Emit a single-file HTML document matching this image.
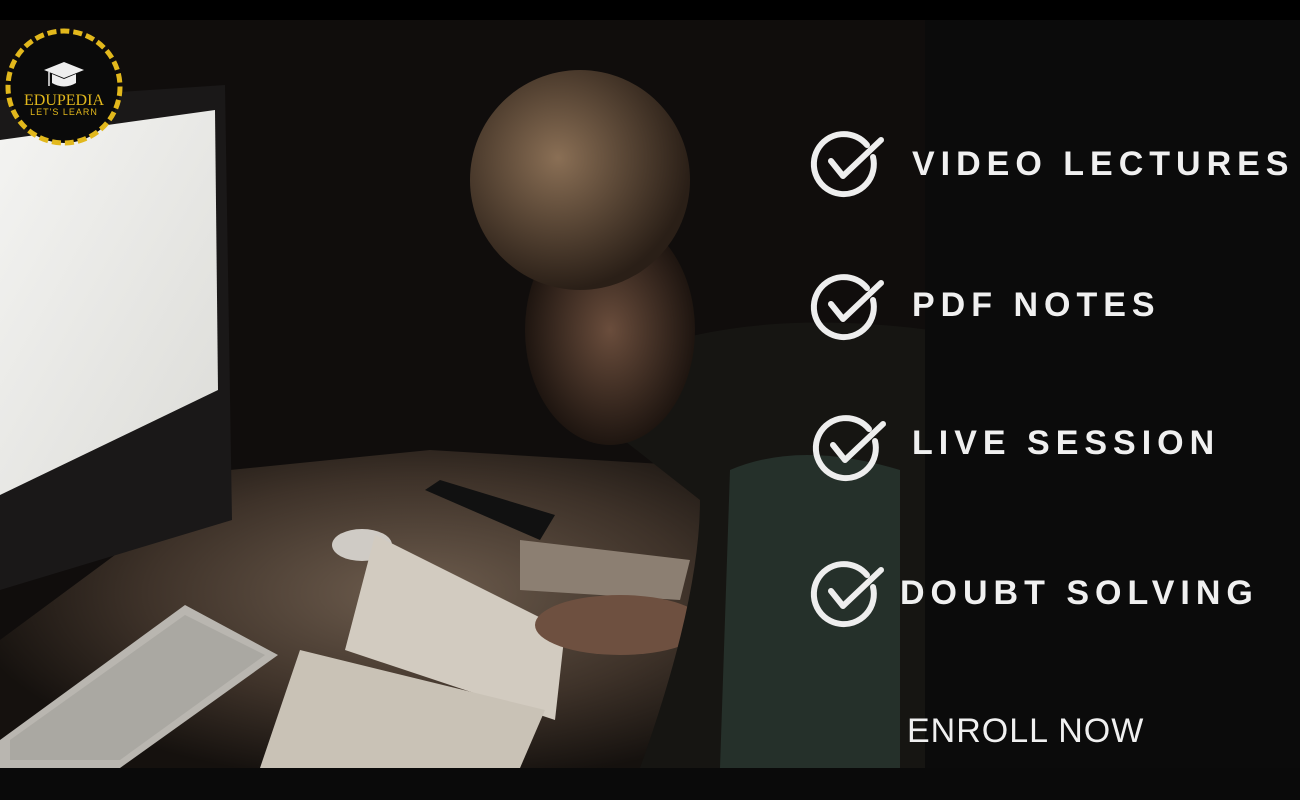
<!DOCTYPE html>
<html><head><meta charset="utf-8"><style>
html,body{margin:0;padding:0;background:#000;width:1300px;height:800px;overflow:hidden}
.t{position:absolute;font-family:"Liberation Sans",sans-serif;color:#f0f0f0;font-weight:bold;font-size:34px;letter-spacing:6px;white-space:nowrap}
</style></head><body>
<svg width="1300" height="800" style="position:absolute;left:0;top:0">
<defs>
<radialGradient id="desk" cx="0.55" cy="0.45" r="0.6"><stop offset="0" stop-color="#6e5d4e"/><stop offset="0.6" stop-color="#3e3229"/><stop offset="1" stop-color="#15110e"/></radialGradient>
<radialGradient id="face" cx="0.5" cy="0.5" r="0.5"><stop offset="0" stop-color="#6a4d3c"/><stop offset="1" stop-color="#1e1510"/></radialGradient>
<radialGradient id="hair" cx="0.4" cy="0.4" r="0.6"><stop offset="0" stop-color="#8a6f55"/><stop offset="1" stop-color="#2a1f17"/></radialGradient>
<linearGradient id="scr" x1="0" y1="0" x2="1" y2="1"><stop offset="0" stop-color="#f4f4f2"/><stop offset="1" stop-color="#dcdcd8"/></linearGradient>
</defs>
<rect x="0" y="0" width="1300" height="800" fill="#000"/>
<rect x="0" y="20" width="1300" height="748" fill="#0c0b0b"/>
<rect x="0" y="768" width="1300" height="32" fill="#0a0a0a"/>
<rect x="0" y="20" width="925" height="748" fill="#100d0c"/>
<polygon points="0,640 230,470 430,450 760,470 760,768 0,768" fill="url(#desk)"/>
<polygon points="0,100 225,85 232,520 0,590" fill="#1a1818"/>
<polygon points="0,140 215,110 218,390 0,495" fill="url(#scr)"/>
<polygon points="0,740 185,605 278,655 120,768 0,768" fill="#b9b6b0"/>
<polygon points="10,740 185,615 265,655 120,760 10,760" fill="#9c9994" opacity="0.5"/>
<ellipse cx="362" cy="545" rx="30" ry="16" fill="#cfcbc5"/>
<polygon points="425,490 440,480 555,515 540,540 " fill="#111"/>
<polygon points="520,540 690,560 680,600 520,590" fill="#8c7f72"/>
<polygon points="375,535 565,630 555,720 345,650" fill="#d2cbc0"/>
<polygon points="300,650 545,710 520,768 260,768" fill="#c9c2b6"/>
<ellipse cx="620" cy="625" rx="85" ry="30" fill="#6e5040"/>
<path d="M560,390 Q700,300 930,330 L930,768 L640,768 Q700,600 700,500 Z" fill="#161512"/>
<path d="M730,470 Q800,440 900,470 L900,768 L720,768 Z" fill="#25302a"/>
<ellipse cx="610" cy="330" rx="85" ry="115" fill="url(#face)"/>
<ellipse cx="580" cy="180" rx="110" ry="110" fill="url(#hair)"/>
<rect x="925" y="20" width="375" height="748" fill="#0b0b0b"/>
<circle cx="64" cy="87" r="56" fill="#0a0a0a" stroke="#e2b81c" stroke-width="5" stroke-dasharray="9 4"/>
<polygon points="44,70 64,62 84,70 64,78" fill="#eee"/>
<path d="M52,74 L52,83 Q64,90 76,83 L76,74 L64,79 Z" fill="#eee"/>
<line x1="49" y1="72" x2="49" y2="86" stroke="#eee" stroke-width="1.5"/>
<text x="64" y="105" text-anchor="middle" font-family="Liberation Serif,serif" font-size="16" fill="#e2b81c">EDUPEDIA</text>
<text x="64" y="115" text-anchor="middle" font-family="Liberation Sans,sans-serif" font-size="9" letter-spacing="1" fill="#e2b81c">LET'S LEARN</text>
<g fill="none" stroke="#eee" stroke-width="6" stroke-linecap="round" stroke-linejoin="round">
<g transform="translate(845,165)"><path d="M22,-20 A30,30 0 1 0 28,-8"/><path d="M-14,-4 L-2,11 L36,-25"/></g>
<g transform="translate(845,308)"><path d="M22,-20 A30,30 0 1 0 28,-8"/><path d="M-14,-4 L-2,11 L36,-25"/></g>
<g transform="translate(847,449)"><path d="M22,-20 A30,30 0 1 0 28,-8"/><path d="M-14,-4 L-2,11 L36,-25"/></g>
<g transform="translate(845,595)"><path d="M22,-20 A30,30 0 1 0 28,-8"/><path d="M-14,-4 L-2,11 L36,-25"/></g>
</g>
</svg>
<div class="t" style="left:912px;top:145px">VIDEO LECTURES</div>
<div class="t" style="left:912px;top:286px">PDF NOTES</div>
<div class="t" style="left:912px;top:424px">LIVE SESSION</div>
<div class="t" style="left:900px;top:574px">DOUBT SOLVING</div>
<div class="t" style="left:907px;top:712px;font-weight:normal;letter-spacing:1px;font-size:34px">ENROLL NOW</div>
</body></html>
